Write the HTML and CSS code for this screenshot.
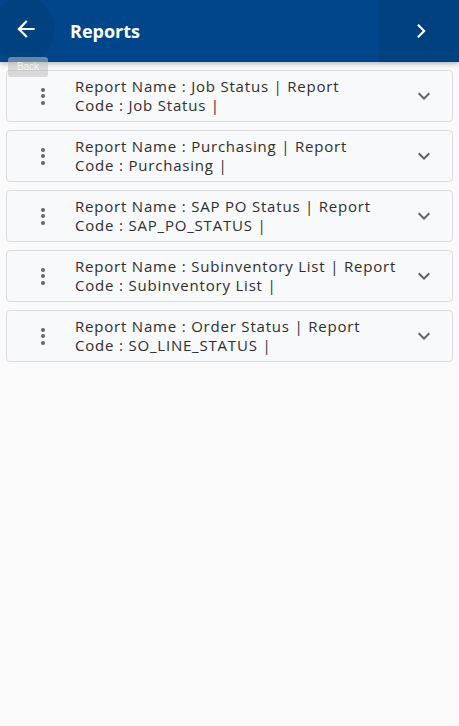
FILE: index.html
```html
<!DOCTYPE html>
<html>
<head>
<meta charset="utf-8">
<link rel="stylesheet" href="styles.css">
</head>
<body>
<header class="toolbar">
  <div class="back-wrap">
    <button class="back-btn" aria-label="Back">
      <svg width="26" height="26" viewBox="0 0 24 24"><path d="M20 11H7.83l5.59-5.59L12 4l-8 8 8 8 1.41-1.41L7.83 13H20v-2z" fill="#fff"/></svg>
    </button>
    <span class="tooltip">Back</span>
  </div>
  <h1 class="title">Reports</h1>
  <button class="next-btn" aria-label="Next">
    <svg width="20" height="20" viewBox="0 0 24 24"><path d="M8.6 5.4 10.4 3.6 18.8 12l-8.4 8.4-1.8-1.8L15.2 12z" fill="#fff"/></svg>
  </button>
</header>
<main class="list">
  <div class="card">
    <span class="dots"><i></i><i></i><i></i></span>
    <div class="text">Report Name : Job Status | Report<br>Code : Job Status |</div>
    <svg class="chev" width="24" height="24" viewBox="0 0 24 24"><path d="M7.41 8.59 12 13.17l4.59-4.58L18 10l-6 6-6-6z" fill="#5f6368"/></svg>
  </div>
  <div class="card">
    <span class="dots"><i></i><i></i><i></i></span>
    <div class="text">Report Name : Purchasing | Report<br>Code : Purchasing |</div>
    <svg class="chev" width="24" height="24" viewBox="0 0 24 24"><path d="M7.41 8.59 12 13.17l4.59-4.58L18 10l-6 6-6-6z" fill="#5f6368"/></svg>
  </div>
  <div class="card">
    <span class="dots"><i></i><i></i><i></i></span>
    <div class="text">Report Name : SAP PO Status | Report<br>Code : SAP_PO_STATUS |</div>
    <svg class="chev" width="24" height="24" viewBox="0 0 24 24"><path d="M7.41 8.59 12 13.17l4.59-4.58L18 10l-6 6-6-6z" fill="#5f6368"/></svg>
  </div>
  <div class="card">
    <span class="dots"><i></i><i></i><i></i></span>
    <div class="text">Report Name : Subinventory List | Report<br>Code : Subinventory List |</div>
    <svg class="chev" width="24" height="24" viewBox="0 0 24 24"><path d="M7.41 8.59 12 13.17l4.59-4.58L18 10l-6 6-6-6z" fill="#5f6368"/></svg>
  </div>
  <div class="card">
    <span class="dots"><i></i><i></i><i></i></span>
    <div class="text">Report Name : Order Status | Report<br>Code : SO_LINE_STATUS |</div>
    <svg class="chev" width="24" height="24" viewBox="0 0 24 24"><path d="M7.41 8.59 12 13.17l4.59-4.58L18 10l-6 6-6-6z" fill="#5f6368"/></svg>
  </div>
</main>
</body>
</html>
```
FILE: styles.css
```css
* { box-sizing: border-box; }
html, body { margin: 0; padding: 0; }
body {
  background: #fafafa;
  font-family: "Open Sans", "Liberation Sans", sans-serif;
  color: #333;
  width: 459px;
  min-height: 726px;
}
.toolbar {
  height: 62px;
  background: #01468a;
  display: flex;
  align-items: center;
  box-shadow: 0 2px 5px rgba(0,0,0,0.25);
  position: relative;
  z-index: 2;
}
.back-wrap {
  position: relative;
  width: 52px;
  height: 62px;
  display: flex;
  align-items: center;
  justify-content: center;
}
.back-btn {
  width: 64px;
  height: 64px;
  border-radius: 50%;
  border: 0;
  background: #00427f;
  display: flex;
  align-items: center;
  justify-content: center;
  margin-left: -6px;
  margin-top: -4px;
  padding: 0 0 0 6px;
  flex: none;
}
.tooltip {
  position: absolute;
  left: 8px;
  top: 57px;
  width: 40px;
  height: 20px;
  background: rgba(190,190,190,0.55);
  border-radius: 3px;
  color: rgba(255,255,255,0.75);
  font-size: 10px;
  line-height: 20px;
  text-align: center;
  font-family: "Liberation Sans", sans-serif;
}
.title {
  margin: 0 0 0 18px;
  flex: 1;
  color: #fff;
  font-size: 18px;
  font-weight: 700;
  font-family: "Open Sans", sans-serif;
}
.next-btn {
  width: 78px;
  height: 62px;
  border: 0;
  background: #00427f;
  box-shadow: -1px 0 2px rgba(0,0,0,0.15);
  display: flex;
  align-items: center;
  justify-content: center;
  padding: 0;
}
.list {
  padding: 8px 6px;
  display: flex;
  flex-direction: column;
  gap: 8px;
}
.card {
  height: 52px;
  background: #f8f9fa;
  border: 1px solid #dadce0;
  border-radius: 4px;
  display: flex;
  align-items: center;
}
.dots {
  width: 68px;
  padding-left: 4px;
  display: flex;
  flex-direction: column;
  align-items: center;
  gap: 2.5px;
  flex: none;
}
.dots i {
  width: 4px;
  height: 4px;
  border-radius: 50%;
  background: #666;
  display: block;
}
.text {
  flex: 1;
  font-size: 15px;
  line-height: 19px;
  letter-spacing: 0.8px;
  padding-right: 8px;
  margin-top: -1px;
  color: #2e2e2e;
}
.chev {
  margin-right: 16px;
  flex: none;
}
```
